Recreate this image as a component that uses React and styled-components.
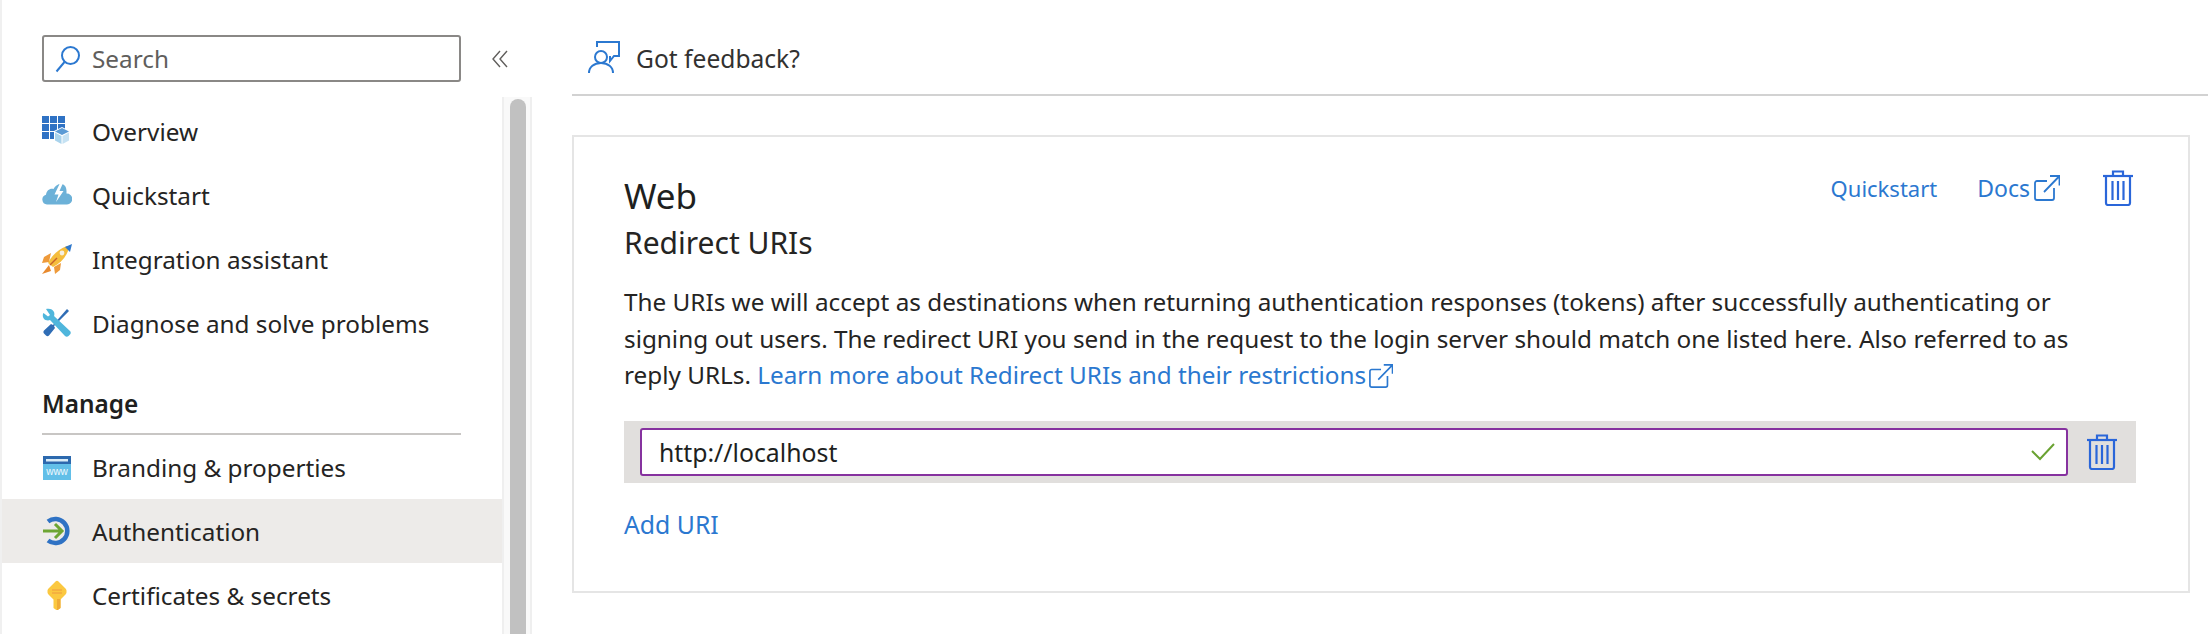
import styled, { createGlobalStyle } from "styled-components";

const GlobalStyle = createGlobalStyle`
  html, body {
    margin: 0;
    padding: 0;
    height: 634px;
    overflow: hidden;
    background: #fff;
  }
  body {
    font-family: "Noto Sans", "Open Sans", sans-serif;
    color: #323130;
  }
  * { box-sizing: border-box; }
`;

const LINK = "#2b78d0";
const TRASH = "#2a66d9";

const Page = styled.div`
  display: flex;
  width: 2208px;
  height: 634px;
  overflow: hidden;
`;

const Sidebar = styled.aside`
  width: 532px;
  flex-shrink: 0;
  height: 634px;
  border-left: 2px solid #f0f0f0;
  display: flex;
  flex-direction: column;
`;

const SearchRow = styled.div`
  height: 97px;
  flex-shrink: 0;
  padding: 35px 0 0 40px;
  display: flex;
  align-items: flex-start;
`;

const SearchBox = styled.div`
  width: 419px;
  height: 47px;
  border: 2px solid #8a8886;
  border-radius: 3px;
  display: flex;
  align-items: center;
  padding-left: 11px;
  gap: 11px;
`;

const SearchLabel = styled.span`
  font-size: 24.3px;
  color: #605e5c;
`;

const Collapse = styled.div`
  margin: 15px 0 0 31px;
  display: flex;
`;

const NavWrap = styled.div`
  flex: 1;
  display: flex;
  min-height: 0;
`;

const NavList = styled.nav`
  width: 500px;
  flex-shrink: 0;
  padding-top: 2px;
`;

const NavItem = styled.div`
  height: 64px;
  display: flex;
  align-items: center;
  padding-left: 40px;
  gap: 20px;
  font-size: 24.3px;
  color: #252423;
  background: ${(p) => (p.$active ? "#edebe9" : "transparent")};
`;

const IconSlot = styled.span`
  width: 30px;
  height: 30px;
  display: flex;
  flex-shrink: 0;
`;

const SectionTitle = styled.div`
  margin: 32px 0 0 40px;
  width: 419px;
  height: 48px;
  border-bottom: 2px solid #c8c6c4;
  font-size: 24.4px;
  font-weight: 600;
  color: #201f1e;
  line-height: 33px;
`;

const ScrollTrack = styled.div`
  width: 30px;
  flex-shrink: 0;
  background: #f9f9f9;
  border-left: 2px solid #efefef;
  border-right: 2px solid #efefef;
  padding: 2px 6px 0;
`;

const ScrollThumb = styled.div`
  width: 16px;
  height: 100%;
  background: #c1c1c1;
  border-radius: 8px 8px 0 0;
`;

const Main = styled.main`
  flex: 1;
  padding-left: 40px;
  padding-right: 18px;
  display: flex;
  flex-direction: column;
`;

const CommandBar = styled.div`
  height: 96px;
  flex-shrink: 0;
  padding: 41px 0 0 16px;
  border-bottom: 2px solid #d2d2d2;
  margin-right: -18px;
  display: flex;
  align-items: flex-start;
  gap: 15px;
`;

const CommandText = styled.span`
  font-size: 24.6px;
  line-height: 34px;
  margin-top: 1px;
  color: #323130;
`;

const Card = styled.section`
  margin-top: 39px;
  height: 458px;
  border: 2px solid #e5e5e5;
  padding: 0 0 0 50px;
`;

const CardHeader = styled.div`
  display: flex;
  justify-content: space-between;
  align-items: flex-start;
  padding-right: 55px;
`;

const Titles = styled.div`
  padding-top: 35px;
`;

const CardTitle = styled.h2`
  margin: 0;
  font-size: 35px;
  font-weight: 400;
  line-height: 48px;
  color: #201f1e;
`;

const SubTitle = styled.h3`
  margin: 0;
  font-size: 30px;
  font-weight: 400;
  line-height: 46px;
  color: #252423;
`;

const CardLinks = styled.div`
  display: flex;
  align-items: center;
  padding-top: 33px;
`;

const LinkText = styled.a`
  color: ${LINK};
  font-size: ${(p) => p.$size || 24.3}px;
  line-height: 34px;
  text-decoration: none;
`;

const DocsLink = styled.span`
  display: flex;
  align-items: center;
  margin-left: 40px;
  gap: 4px;
`;

const TrashButton = styled.span`
  display: flex;
  margin-left: ${(p) => p.$left || 0}px;
`;

const Description = styled.p`
  margin: 18px 0 0;
  font-size: 24.3px;
  line-height: 36.5px;
  color: #252423;
  white-space: nowrap;

  svg {
    vertical-align: -4px;
    margin-left: 3px;
  }
`;

const UriRow = styled.div`
  margin-top: 27px;
  width: 1512px;
  height: 62px;
  background: #e1dfdd;
  display: flex;
  align-items: center;
  padding-left: 16px;
`;

const UriInput = styled.div`
  width: 1428px;
  height: 48px;
  background: #fff;
  border: 2px solid #86329f;
  border-radius: 3px;
  display: flex;
  align-items: center;
  justify-content: space-between;
  padding: 0 11px 0 17px;
  font-size: 24.8px;
  color: #201f1e;
`;

const AddUri = styled(LinkText)`
  display: block;
  margin-top: 24px;
`;

const SearchIcon = () => (
  <svg width="26" height="28" viewBox="0 0 26 28" fill="none" stroke={LINK} strokeWidth="2">
    <circle cx="15.5" cy="10.5" r="8.5" />
    <path d="M9.5 17 1.5 26.5" />
  </svg>
);

const ChevronsIcon = () => (
  <svg width="16" height="18" viewBox="0 0 16 18" fill="none" stroke="#605e5c" strokeWidth="1.4">
    <path d="M8 1 1 9l7 8M15 1 8 9l7 8" />
  </svg>
);

const OverviewIcon = () => (
  <svg width="30" height="30" viewBox="0 0 30 30">
    <g fill="#2f72c4">
      <rect x="0" y="0" width="7" height="7" />
      <rect x="8" y="0" width="7" height="7" />
      <rect x="16" y="0" width="7" height="7" />
      <rect x="0" y="8" width="7" height="7" />
      <rect x="8" y="8" width="7" height="7" />
      <rect x="16" y="8" width="7" height="7" />
      <rect x="0" y="16" width="7" height="7" />
      <rect x="8" y="16" width="7" height="7" />
    </g>
    <path d="M20 11 28 15v9l-8 4-8-4v-9z" fill="#fff" />
    <path d="M20 12 27 15.5 20 19 13 15.5z" fill="#5b9bd5" />
    <path d="M13 16.5 19.5 20v8L13 24.5z" fill="#a9d3ec" />
    <path d="M27 16.5 20.5 20v8L27 24.5z" fill="#c6e2f3" />
  </svg>
);

const CloudIcon = () => (
  <svg width="30" height="30" viewBox="0 0 30 30">
    <path d="M5 24.5a5 5 0 0 1-1-9.800C4.500 10.500 8 8 11.500 9 13 6 15.500 4 19 4c3.500 0 5.500 3 5.500 7v2.500A5.500 5.500 0 0 1 25 24.500z" fill="#6cb1d8" />
    <path d="M18 3 12.500 14.500H16.500L14 22l7.500-11h-4L21 3z" fill="#fff" />
  </svg>
);

const RocketIcon = () => (
  <svg width="30" height="30" viewBox="0 0 30 30">
    <path d="M9 9 2 13 0 19l7-1zM19 19l-1 7-5 4-1-7z" fill="#ee9a3a" />
    <path d="M7 21 0 30l9-3z" fill="#e88a2e" />
    <path d="M6 19C10 11 17 5 25 2l2 2c-2 8-8 15-16 19z" fill="#f5bd3c" />
    <path d="M23 3l7-3-2 8z" fill="#2f78cc" />
    <circle cx="20" cy="9" r="2.4" fill="#f4efe2" />
    <path d="M8 21 15 14" stroke="#c8632a" strokeWidth="1.5" />
  </svg>
);

const ToolsIcon = () => (
  <svg width="30" height="30" viewBox="0 0 30 30">
    <path d="M25 1 27 3 12 18l1 2-6 7.5c-1 1-2 1-3 0l-2-2c-.8-1-.8-2 0-3L9 16l2 1z" fill="#2f6db5" />
    <path d="M4 1c3-1 7 0 8 3 .5 1.500.5 3 0 4l16 15c1 1 1 2.500 0 3.500l-1.500 1.500c-1 1-2.500 1-3.500 0L8 12c-1 .5-3 .5-4.500 0C1 11 0 7 1.500 5L6 8.500 8 7z" fill="#4fb6dc" />
  </svg>
);

const WebIcon = () => (
  <svg width="30" height="30" viewBox="0 0 30 30">
    <rect x="1" y="4" width="28" height="24" fill="#62bfe8" />
    <rect x="1" y="4" width="28" height="8" fill="#2c69ae" />
    <rect x="4" y="7" width="22" height="2.5" fill="#d9ecf7" />
    <text x="15" y="23" fontSize="10" fontFamily="Liberation Sans, sans-serif" fill="#f1f9fd" textAnchor="middle">www</text>
  </svg>
);

const AuthIcon = () => (
  <svg width="30" height="30" viewBox="0 0 30 30" fill="none">
    <path d="M6 5.5a12 12 0 1 1 0 19" stroke="#2f72c4" strokeWidth="4.5" />
    <path d="M1 15h19M13 8l7 7-7 7" stroke="#6da533" strokeWidth="3" />
  </svg>
);

const KeyIcon = () => (
  <svg width="30" height="30" viewBox="0 0 30 30">
    <path d="M13.5 1.500a2 2 0 0 1 3 0l7 7a3 3 0 0 1 1 2v2a3 3 0 0 1-1 2l-5 5V28l-3.500 2.500L11.500 28v-8.500l-5-5a3 3 0 0 1-1-2v-2a3 3 0 0 1 1-2z" fill="#fbc840" />
    <path d="M15 19h3.500v9L15 30.500z" fill="#efab36" />
    <path d="M10 10h10M10 13h10" stroke="#ef9a3e" strokeWidth="1.2" />
  </svg>
);

const FeedbackIcon = () => (
  <svg width="33" height="33" viewBox="0 0 33 33" fill="none" stroke={LINK} strokeWidth="2">
    <path d="M9 6V1h22v14h-5l-4 5v-5" />
    <circle cx="13" cy="16" r="6" />
    <path d="M1 32c0-6 5-10 12-10s12 4 12 10" />
  </svg>
);

const ExternalIcon = ({ size = 26 }) => (
  <svg width={size} height={size} viewBox="0 0 26 26" fill="none" stroke={LINK} strokeWidth="1.8">
    <path d="M13 6H3a2 2 0 0 0-2 2v15a2 2 0 0 0 2 2h15a2 2 0 0 0 2-2V13" />
    <path d="M10 17 25 1.5M16 1h9.500v9.500" />
  </svg>
);

const TrashIcon = () => (
  <svg width="30" height="36" viewBox="0 0 30 36" fill="none" stroke={TRASH} strokeWidth="2.2">
    <path d="M0 6h30" />
    <path d="M10 6V1.5h10V6" />
    <path d="M3 6v27a2 2 0 0 0 2 2h20a2 2 0 0 0 2-2V6" />
    <path d="M9.5 11v19M15 11v19M20.5 11v19" />
  </svg>
);

const CheckIcon = () => (
  <svg width="24" height="18" viewBox="0 0 24 18" fill="none" stroke="#6aa232" strokeWidth="2">
    <path d="M1 8l8 8L23 1" />
  </svg>
);

const topItems = [
  { label: "Overview", icon: <OverviewIcon /> },
  { label: "Quickstart", icon: <CloudIcon /> },
  { label: "Integration assistant", icon: <RocketIcon /> },
  { label: "Diagnose and solve problems", icon: <ToolsIcon /> },
];

const manageItems = [
  { label: "Branding & properties", icon: <WebIcon /> },
  { label: "Authentication", icon: <AuthIcon />, active: true },
  { label: "Certificates & secrets", icon: <KeyIcon /> },
];

const renderItem = (item) => (
  <NavItem key={item.label} $active={item.active}>
    <IconSlot>{item.icon}</IconSlot>
    {item.label}
  </NavItem>
);

export default function App() {
  return (
    <Page>
      <GlobalStyle />
      <Sidebar>
        <SearchRow>
          <SearchBox>
            <SearchIcon />
            <SearchLabel>Search</SearchLabel>
          </SearchBox>
          <Collapse><ChevronsIcon /></Collapse>
        </SearchRow>
        <NavWrap>
          <NavList>
            {topItems.map(renderItem)}
            <SectionTitle>Manage</SectionTitle>
            {manageItems.map(renderItem)}
          </NavList>
          <ScrollTrack><ScrollThumb /></ScrollTrack>
        </NavWrap>
      </Sidebar>
      <Main>
        <CommandBar>
          <FeedbackIcon />
          <CommandText>Got feedback?</CommandText>
        </CommandBar>
        <Card>
          <CardHeader>
            <Titles>
              <CardTitle>Web</CardTitle>
              <SubTitle>Redirect URIs</SubTitle>
            </Titles>
            <CardLinks>
              <LinkText $size={22}>Quickstart</LinkText>
              <DocsLink>
                <LinkText $size={23}>Docs</LinkText>
                <ExternalIcon />
              </DocsLink>
              <TrashButton $left={43}><TrashIcon /></TrashButton>
            </CardLinks>
          </CardHeader>
          <Description>
            The URIs we will accept as destinations when returning authentication responses (tokens) after successfully authenticating or<br />
            signing out users. The redirect URI you send in the request to the login server should match one listed here. Also referred to as<br />
            reply URLs. <LinkText>Learn more about Redirect URIs and their restrictions</LinkText><ExternalIcon size={24} />
          </Description>
          <UriRow>
            <UriInput>
              http://localhost
              <CheckIcon />
            </UriInput>
            <TrashButton $left={19}><TrashIcon /></TrashButton>
          </UriRow>
          <AddUri $size={24.8}>Add URI</AddUri>
        </Card>
      </Main>
    </Page>
  );
}
